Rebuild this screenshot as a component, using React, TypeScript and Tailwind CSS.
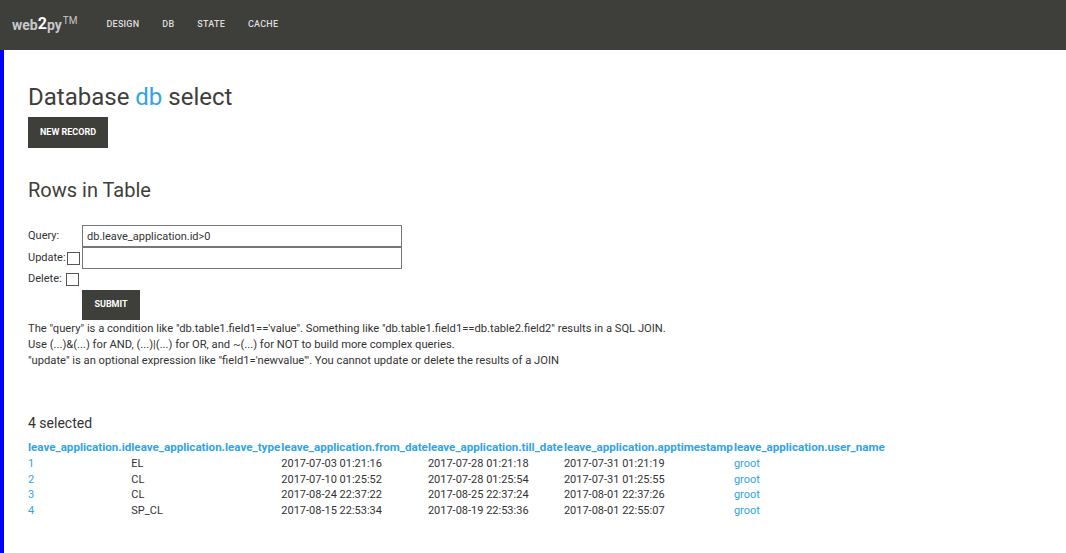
import React from 'react';

const rows = [
  ['1', 'EL', '2017-07-03 01:21:16', '2017-07-28 01:21:18', '2017-07-31 01:21:19', 'groot'],
  ['2', 'CL', '2017-07-10 01:25:52', '2017-07-28 01:25:54', '2017-07-31 01:25:55', 'groot'],
  ['3', 'CL', '2017-08-24 22:37:22', '2017-08-25 22:37:24', '2017-08-01 22:37:26', 'groot'],
  ['4', 'SP_CL', '2017-08-15 22:53:34', '2017-08-19 22:53:36', '2017-08-01 22:55:07', 'groot'],
];

const headers = [
  { label: 'leave_application.id', w: 'w-[103px]' },
  { label: 'leave_application.leave_type', w: 'w-[150px]' },
  { label: 'leave_application.from_date', w: 'w-[146px]' },
  { label: 'leave_application.till_date', w: 'w-[136px]' },
  { label: 'leave_application.apptimestamp', w: 'w-[170px]' },
  { label: 'leave_application.user_name', w: 'w-[151px]' },
];

export default function App() {
  return (
    <div className="font-['Roboto',sans-serif] text-[#333] bg-white">
      {/* Navbar */}
      <div className="h-[50px] bg-[#3e3e3b] flex items-center pl-[12px]">
        <div className="flex items-start text-[#c8c8c8] font-bold text-[14px] leading-none mr-[29px]">
          <span>web</span>
          <span className="text-white text-[16px] -mt-[2px]">2</span>
          <span>py</span>
          <span className="text-[10px] font-normal -mt-[2px] ml-[1px]">TM</span>
        </div>
        <nav className="flex gap-[23px] text-[9px] font-medium text-[#ddd] tracking-wide">
          <span>DESIGN</span>
          <span>DB</span>
          <span>STATE</span>
          <span>CACHE</span>
        </nav>
      </div>

      <div className="border-l-[4px] border-[#0000ff] min-h-[503px] pl-[24px] pt-[33px]">
        <h1 className="text-[24px] leading-[28px] text-[#3e3e3b]">
          Database <span className="text-[#2fa4e7]">db</span> select
        </h1>
        <button className="mt-[6px] w-[80px] h-[31px] bg-[#3e3e3b] text-white text-[9px] font-bold">
          NEW RECORD
        </button>

        <h2 className="mt-[30px] text-[20px] leading-[24px] text-[#3e3e3b]">Rows in Table</h2>

        <table className="mt-[23px] text-[11px] border-collapse">
          <tbody>
            <tr>
              <td className="w-[54px] align-middle">Query:</td>
              <td className="p-0">
                <input
                  className="w-[320px] h-[22px] border border-[#777] px-[4px] text-[11px] text-[#333] outline-none"
                  defaultValue="db.leave_application.id>0"
                />
              </td>
            </tr>
            <tr>
              <td className="align-middle">
                <span className="inline-flex items-center">
                  Update:
                  <span className="inline-block w-[13px] h-[13px] border border-[#555] bg-white ml-[1px]" />
                </span>
              </td>
              <td className="p-0">
                <input className="w-[320px] h-[22px] border border-[#777] px-[4px] outline-none" />
              </td>
            </tr>
            <tr>
              <td className="h-[21px] align-middle">
                <span className="inline-flex items-center">
                  Delete:
                  <span className="inline-block w-[13px] h-[13px] border border-[#555] bg-white ml-[4px]" />
                </span>
              </td>
              <td />
            </tr>
            <tr>
              <td />
              <td className="pt-0">
                <button className="w-[58px] h-[30px] bg-[#3e3e3b] text-white text-[9px] font-bold">
                  SUBMIT
                </button>
              </td>
            </tr>
          </tbody>
        </table>

        <div className="text-[11.2px] leading-[16px] mt-[1px]">
          <p>
            The "query" is a condition like "db.table1.field1=='value". Something like "db.table1.field1==db.table2.field2"
            results in a SQL JOIN.
          </p>
          <p>Use (...)&amp;(...) for AND, (...)|(...) for OR, and ~(...) for NOT to build more complex queries.</p>
          <p>"update" is an optional expression like "field1='newvalue'". You cannot update or delete the results of a JOIN</p>
        </div>

        <h3 className="mt-[45px] text-[14px] leading-[18px]">4 selected</h3>

        <table className="mt-[6px] text-[11px] border-collapse table-fixed">
          <thead>
            <tr>
              {headers.map(h => (
                <th
                  key={h.label}
                  className={'text-left font-bold text-[#2fa4e7] p-0 leading-[18px] whitespace-nowrap text-[11.6px] ' + h.w}
                >
                  {h.label}
                </th>
              ))}
            </tr>
          </thead>
          <tbody>
            {rows.map(r => (
              <tr key={r[0]}>
                {r.map((c, i) => (
                  <td
                    key={i}
                    className={
                      'p-0 leading-[15.7px] whitespace-nowrap ' +
                      (i === 0 || i === 5 ? 'text-[#2fa4e7]' : 'text-[#333]')
                    }
                  >
                    {c}
                  </td>
                ))}
              </tr>
            ))}
          </tbody>
        </table>
      </div>
    </div>
  );
}
